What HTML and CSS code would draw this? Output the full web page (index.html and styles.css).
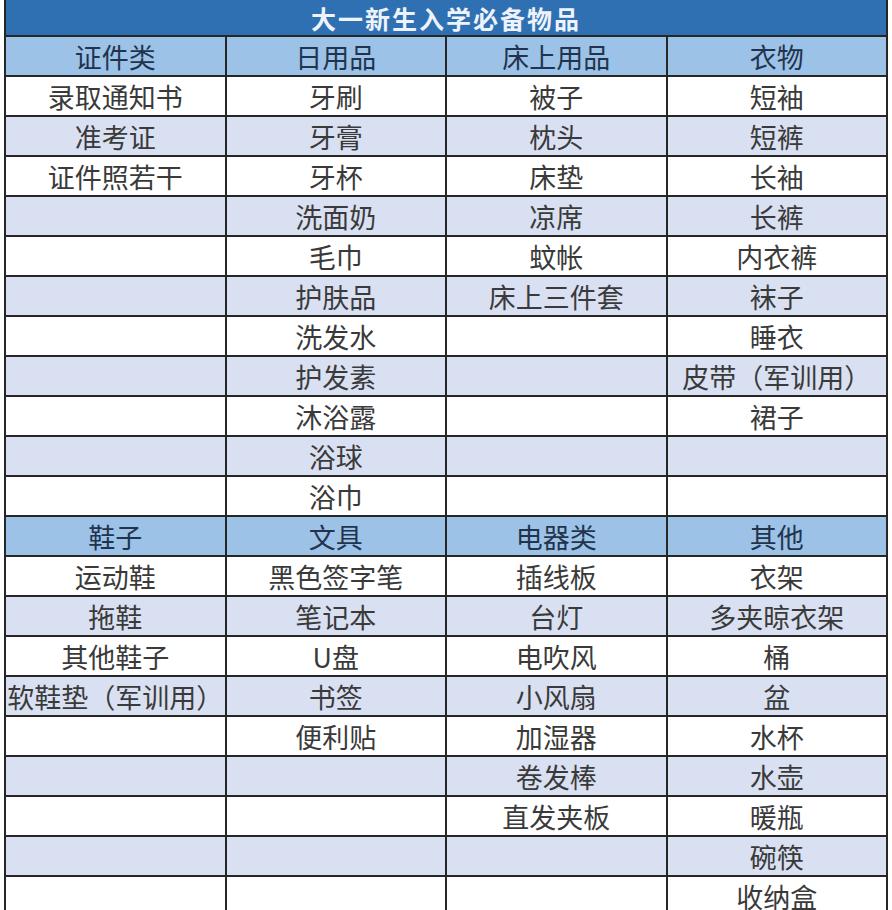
FILE: index.html
```html
<!DOCTYPE html>
<html lang="zh-CN">
<head>
<meta charset="utf-8">
<title>大一新生入学必备物品</title>
<link rel="stylesheet" href="styles.css">
</head>
<body>
<div class="sheet">
  <div class="title">大一新生入学必备物品</div>

  <div class="row head"><div class="cell">证件类</div><div class="cell">日用品</div><div class="cell">床上用品</div><div class="cell">衣物</div></div>
  <div class="row"><div class="cell">录取通知书</div><div class="cell">牙刷</div><div class="cell">被子</div><div class="cell">短袖</div></div>
  <div class="row alt"><div class="cell">准考证</div><div class="cell">牙膏</div><div class="cell">枕头</div><div class="cell">短裤</div></div>
  <div class="row"><div class="cell">证件照若干</div><div class="cell">牙杯</div><div class="cell">床垫</div><div class="cell">长袖</div></div>
  <div class="row alt"><div class="cell"></div><div class="cell">洗面奶</div><div class="cell">凉席</div><div class="cell">长裤</div></div>
  <div class="row"><div class="cell"></div><div class="cell">毛巾</div><div class="cell">蚊帐</div><div class="cell">内衣裤</div></div>
  <div class="row alt"><div class="cell"></div><div class="cell">护肤品</div><div class="cell">床上三件套</div><div class="cell">袜子</div></div>
  <div class="row"><div class="cell"></div><div class="cell">洗发水</div><div class="cell"></div><div class="cell">睡衣</div></div>
  <div class="row alt"><div class="cell"></div><div class="cell">护发素</div><div class="cell"></div><div class="cell">皮带（军训用）</div></div>
  <div class="row"><div class="cell"></div><div class="cell">沐浴露</div><div class="cell"></div><div class="cell">裙子</div></div>
  <div class="row alt"><div class="cell"></div><div class="cell">浴球</div><div class="cell"></div><div class="cell"></div></div>
  <div class="row"><div class="cell"></div><div class="cell">浴巾</div><div class="cell"></div><div class="cell"></div></div>

  <div class="row head"><div class="cell">鞋子</div><div class="cell">文具</div><div class="cell">电器类</div><div class="cell">其他</div></div>
  <div class="row"><div class="cell">运动鞋</div><div class="cell">黑色签字笔</div><div class="cell">插线板</div><div class="cell">衣架</div></div>
  <div class="row alt"><div class="cell">拖鞋</div><div class="cell">笔记本</div><div class="cell">台灯</div><div class="cell">多夹晾衣架</div></div>
  <div class="row"><div class="cell">其他鞋子</div><div class="cell">U盘</div><div class="cell">电吹风</div><div class="cell">桶</div></div>
  <div class="row alt"><div class="cell">软鞋垫（军训用）</div><div class="cell">书签</div><div class="cell">小风扇</div><div class="cell">盆</div></div>
  <div class="row"><div class="cell"></div><div class="cell">便利贴</div><div class="cell">加湿器</div><div class="cell">水杯</div></div>
  <div class="row alt"><div class="cell"></div><div class="cell"></div><div class="cell">卷发棒</div><div class="cell">水壶</div></div>
  <div class="row"><div class="cell"></div><div class="cell"></div><div class="cell">直发夹板</div><div class="cell">暖瓶</div></div>
  <div class="row alt"><div class="cell"></div><div class="cell"></div><div class="cell"></div><div class="cell">碗筷</div></div>
  <div class="row"><div class="cell"></div><div class="cell"></div><div class="cell"></div><div class="cell">收纳盒</div></div>
</div>
</body>
</html>
```

FILE: styles.css
```css
html, body {
  margin: 0;
  padding: 0;
  background: #ffffff;
}

body {
  font-family: "Noto Sans CJK SC", "Noto Sans", sans-serif;
  overflow: hidden;
}

.sheet {
  width: 880px;
  margin-left: 4px;
  padding: 0 2px 2px;
  background: #262626;
  display: flex;
  flex-direction: column;
  gap: 2px;
}

.title {
  height: 35px;
  background: #2f70b2;
  color: #eef3fb;
  font-size: 25px;
  font-weight: 700;
  letter-spacing: 2px;
  text-align: center;
  display: flex;
  align-items: center;
  justify-content: center;
}

.title-text {
  display: block;
}

.row {
  display: grid;
  grid-template-columns: repeat(4, 1fr);
  gap: 2px;
}

.cell {
  height: 38px;
  background: #ffffff;
  color: #3a3a3a;
  font-size: 27px;
  line-height: 40px;
  text-align: center;
  white-space: nowrap;
  overflow: hidden;
}

.row.alt .cell {
  background: #d9e0f1;
}

.row.head .cell {
  background: #9dc2e7;
  color: #22344d;
}
```
